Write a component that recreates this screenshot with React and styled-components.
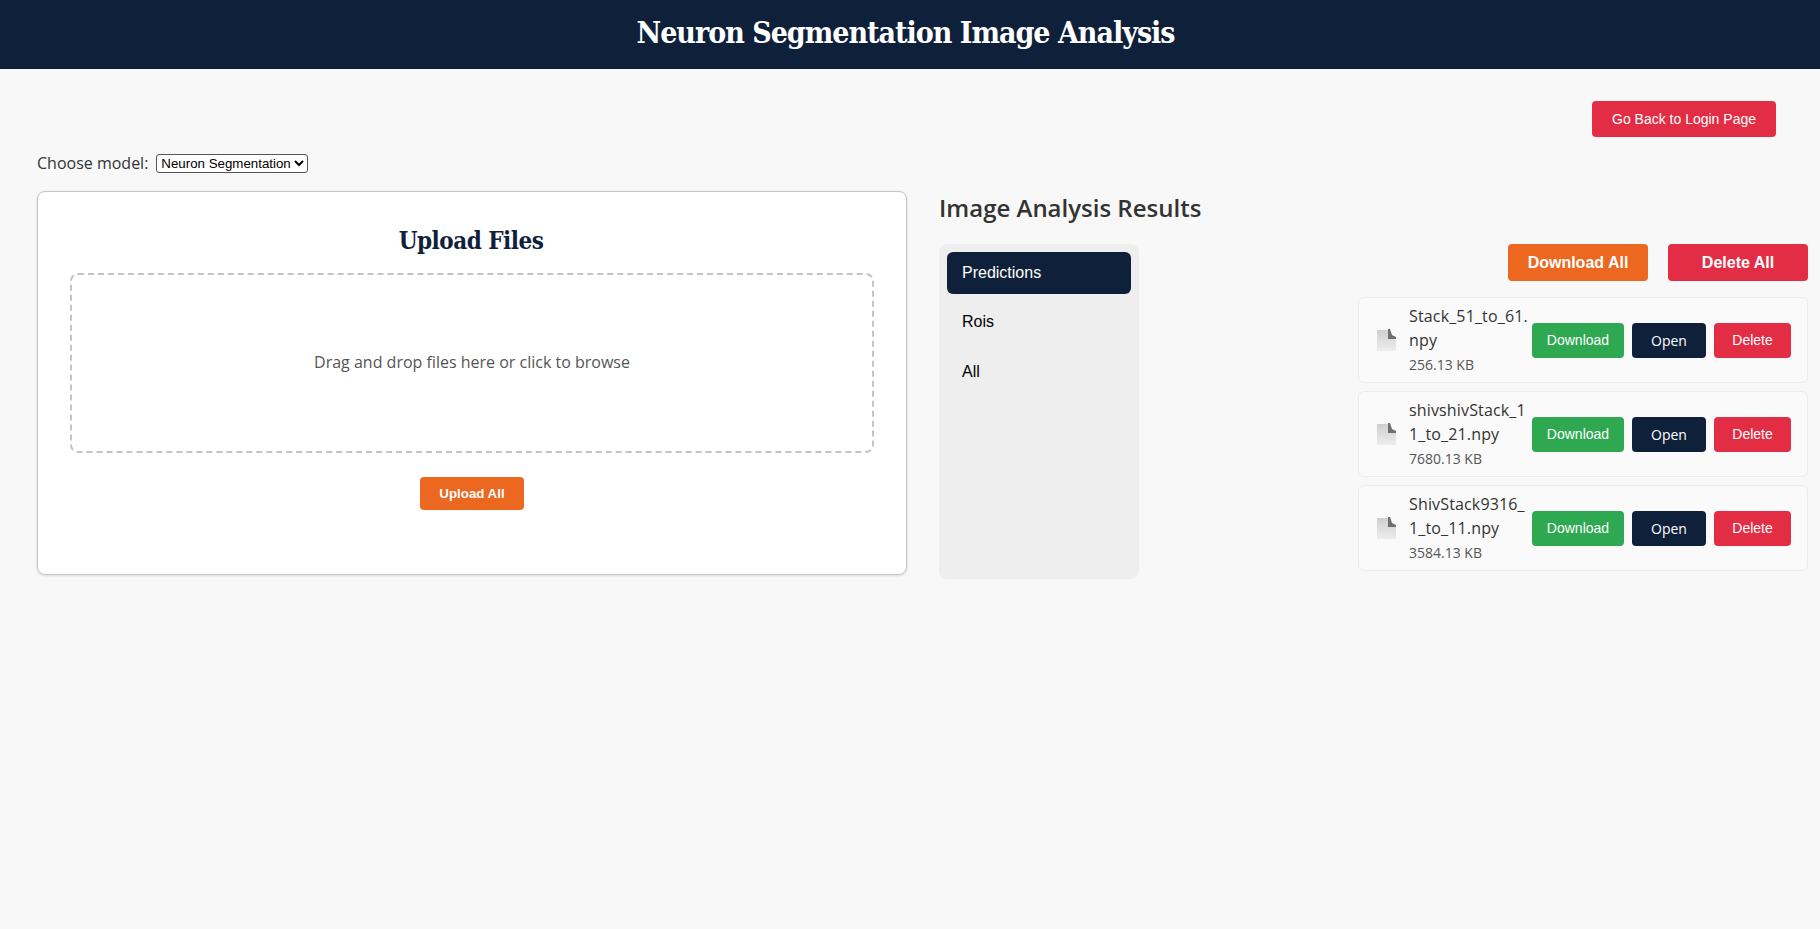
import React from "react";
import styled, { createGlobalStyle } from "styled-components";

const navy = "#0f213a";
const orange = "#ec671f";
const red = "#e32d44";
const green = "#2ea851";

const GlobalStyle = createGlobalStyle`
  html, body {
    margin: 0;
    padding: 0;
    background: #f8f8f8;
  }
  body {
    font-family: "Open Sans", "Noto Sans", sans-serif;
    color: #333;
  }
  * {
    box-sizing: border-box;
  }
`;

const Page = styled.div`
  min-height: 929px;
  background: #f8f8f8;
`;

const Header = styled.header`
  height: 69px;
  background: ${navy};
  display: flex;
  align-items: center;
  justify-content: center;
`;

const Title = styled.h1`
  margin: 0 9px 4px 0;
  color: #fff;
  font-family: "DejaVu Serif", "Liberation Serif", serif;
  font-stretch: condensed;
  font-size: 30px;
  letter-spacing: -1px;
  font-weight: 700;
`;

const Main = styled.main`
  padding: 32px 12px 0 37px;
`;

const TopBar = styled.div`
  display: flex;
  justify-content: flex-end;
  padding-right: 32px;
`;

const Button = styled.button`
  border: none;
  border-radius: 4px;
  color: #fff;
  background: ${(p) => p.$bg};
  font-family: ${(p) => (p.$open ? '"Open Sans", sans-serif' : '"Liberation Sans", sans-serif')};
  cursor: pointer;
  padding: 0;
`;

const BackButton = styled(Button)`
  width: 184px;
  height: 36px;
  font-size: 14px;
  font-weight: 500;
`;

const ModelRow = styled.div`
  display: flex;
  align-items: center;
  height: 22px;
  margin-top: 15px;
  font-size: 16px;
  color: #333;
`;

const ModelSelect = styled.select`
  margin-left: 8px;
  width: 152px;
  height: 19px;
  padding: 0;
  background: #fff;
  border: 1px solid #555;
  border-radius: 3px;
  font-family: "Liberation Sans", sans-serif;
  font-size: 13.3px;
  color: #000;
`;

const Columns = styled.div`
  display: grid;
  grid-template-columns: 870px 869px;
  column-gap: 32px;
  margin-top: 17px;
  align-items: start;
`;

const UploadCard = styled.section`
  height: 384px;
  background: #fff;
  border: 1px solid #c6c6c6;
  border-radius: 8px;
  box-shadow: 0 1px 3px rgba(0, 0, 0, 0.12);
  padding: 32px;
  display: flex;
  flex-direction: column;
  align-items: center;
`;

const CardTitle = styled.h2`
  margin: 0 2px 0 0;
  color: ${navy};
  font-family: "DejaVu Serif", "Liberation Serif", serif;
  font-stretch: condensed;
  font-size: 24px;
  letter-spacing: -0.5px;
  line-height: 34px;
  font-weight: 700;
`;

const DropZone = styled.div`
  width: 100%;
  height: 180px;
  margin-top: 15px;
  padding-bottom: 2px;
  border: 2px dashed #c4c4c4;
  border-radius: 8px;
  display: flex;
  align-items: center;
  justify-content: center;
  font-size: 16px;
  color: #555;
`;

const UploadButton = styled(Button)`
  width: 104px;
  height: 33px;
  margin-top: 24px;
  font-size: 13.3px;
  font-weight: 700;
`;

const ResultsTitle = styled.h2`
  margin: 0;
  height: 53px;
  font-size: 24px;
  line-height: 34px;
  font-weight: 600;
  color: #333;
`;

const ResultsBody = styled.div`
  display: flex;
  justify-content: space-between;
  align-items: flex-start;
`;

const TabList = styled.nav`
  width: 200px;
  height: 335px;
  padding: 8px;
  background: #eee;
  border-radius: 8px;
  display: flex;
  flex-direction: column;
  gap: 8px;
`;

const Tab = styled.div`
  height: 42px;
  padding: 0 15px ${(p) => (p.$active ? "1px" : "2px")};
  display: flex;
  align-items: center;
  border-radius: 6px;
  font-family: "Liberation Sans", sans-serif;
  font-size: 16px;
  color: ${(p) => (p.$active ? "#fff" : "#000")};
  background: ${(p) => (p.$active ? navy : "transparent")};
`;

const FilesColumn = styled.div`
  width: 450px;
`;

const BulkActions = styled.div`
  display: flex;
  justify-content: flex-end;
  gap: 20px;
  margin-bottom: 16px;
`;

const BulkButton = styled(Button)`
  width: 140px;
  height: 37px;
  font-size: 16px;
  font-weight: 700;
`;

const FileList = styled.div`
  display: flex;
  flex-direction: column;
  gap: 8px;
`;

const FileRow = styled.div`
  height: 86px;
  padding: 0 17px 0 18px;
  display: flex;
  align-items: center;
  background: #fafafa;
  border: 1px solid #ececec;
  border-radius: 6px;
`;

const FileIconBox = styled.svg`
  flex: none;
  width: 19px;
  height: 22px;
`;

const FileInfo = styled.div`
  width: 123px;
  margin-left: 13px;
  flex: none;
`;

const FileName = styled.div`
  font-size: 16px;
  line-height: 23.5px;
  font-weight: 500;
  letter-spacing: 0.15px;
  color: #333;
  word-break: break-all;
`;

const FileSize = styled.div`
  margin-top: 2px;
  font-size: 14px;
  line-height: 21px;
  color: #555;
`;

const RowActions = styled.div`
  display: flex;
  gap: 8px;
`;

const RowButton = styled(Button)`
  width: ${(p) => p.$w}px;
  height: 35px;
  font-size: 14px;
`;

const FileIcon = () => (
  <FileIconBox viewBox="0 0 19 22">
    <defs>
      <linearGradient id="fileFill" x1="0" y1="0" x2="0" y2="1">
        <stop offset="0" stopColor="#cfcfcf" />
        <stop offset="1" stopColor="#ededed" />
      </linearGradient>
    </defs>
    <path d="M0 1h11l1 7 7 1v13H0z" fill="url(#fileFill)" />
    <path d="M11 0h2l2 6 4 2v2h-8z" fill="#6f6f6f" />
  </FileIconBox>
);

const files = [
  { name: "Stack_51_to_61.npy", size: "256.13 KB" },
  { name: "shivshivStack_11_to_21.npy", size: "7680.13 KB" },
  { name: "ShivStack9316_1_to_11.npy", size: "3584.13 KB" },
];

export default function App() {
  return (
    <Page>
      <GlobalStyle />
      <Header>
        <Title>Neuron Segmentation Image Analysis</Title>
      </Header>
      <Main>
        <TopBar>
          <BackButton $bg={red}>Go Back to Login Page</BackButton>
        </TopBar>
        <ModelRow>
          Choose model:
          <ModelSelect defaultValue="neuron">
            <option value="neuron">Neuron Segmentation</option>
          </ModelSelect>
        </ModelRow>
        <Columns>
          <UploadCard>
            <CardTitle>Upload Files</CardTitle>
            <DropZone>Drag and drop files here or click to browse</DropZone>
            <UploadButton $bg={orange}>Upload All</UploadButton>
          </UploadCard>
          <div>
            <ResultsTitle>Image Analysis Results</ResultsTitle>
            <ResultsBody>
              <TabList>
                <Tab $active>Predictions</Tab>
                <Tab>Rois</Tab>
                <Tab>All</Tab>
              </TabList>
              <FilesColumn>
                <BulkActions>
                  <BulkButton $bg={orange}>Download All</BulkButton>
                  <BulkButton $bg={red}>Delete All</BulkButton>
                </BulkActions>
                <FileList>
                  {files.map((file) => (
                    <FileRow key={file.name}>
                      <FileIcon />
                      <FileInfo>
                        <FileName>{file.name}</FileName>
                        <FileSize>{file.size}</FileSize>
                      </FileInfo>
                      <RowActions>
                        <RowButton $bg={green} $w={92}>Download</RowButton>
                        <RowButton $bg={navy} $w={74} $open>Open</RowButton>
                        <RowButton $bg={red} $w={77}>Delete</RowButton>
                      </RowActions>
                    </FileRow>
                  ))}
                </FileList>
              </FilesColumn>
            </ResultsBody>
          </div>
        </Columns>
      </Main>
    </Page>
  );
}
